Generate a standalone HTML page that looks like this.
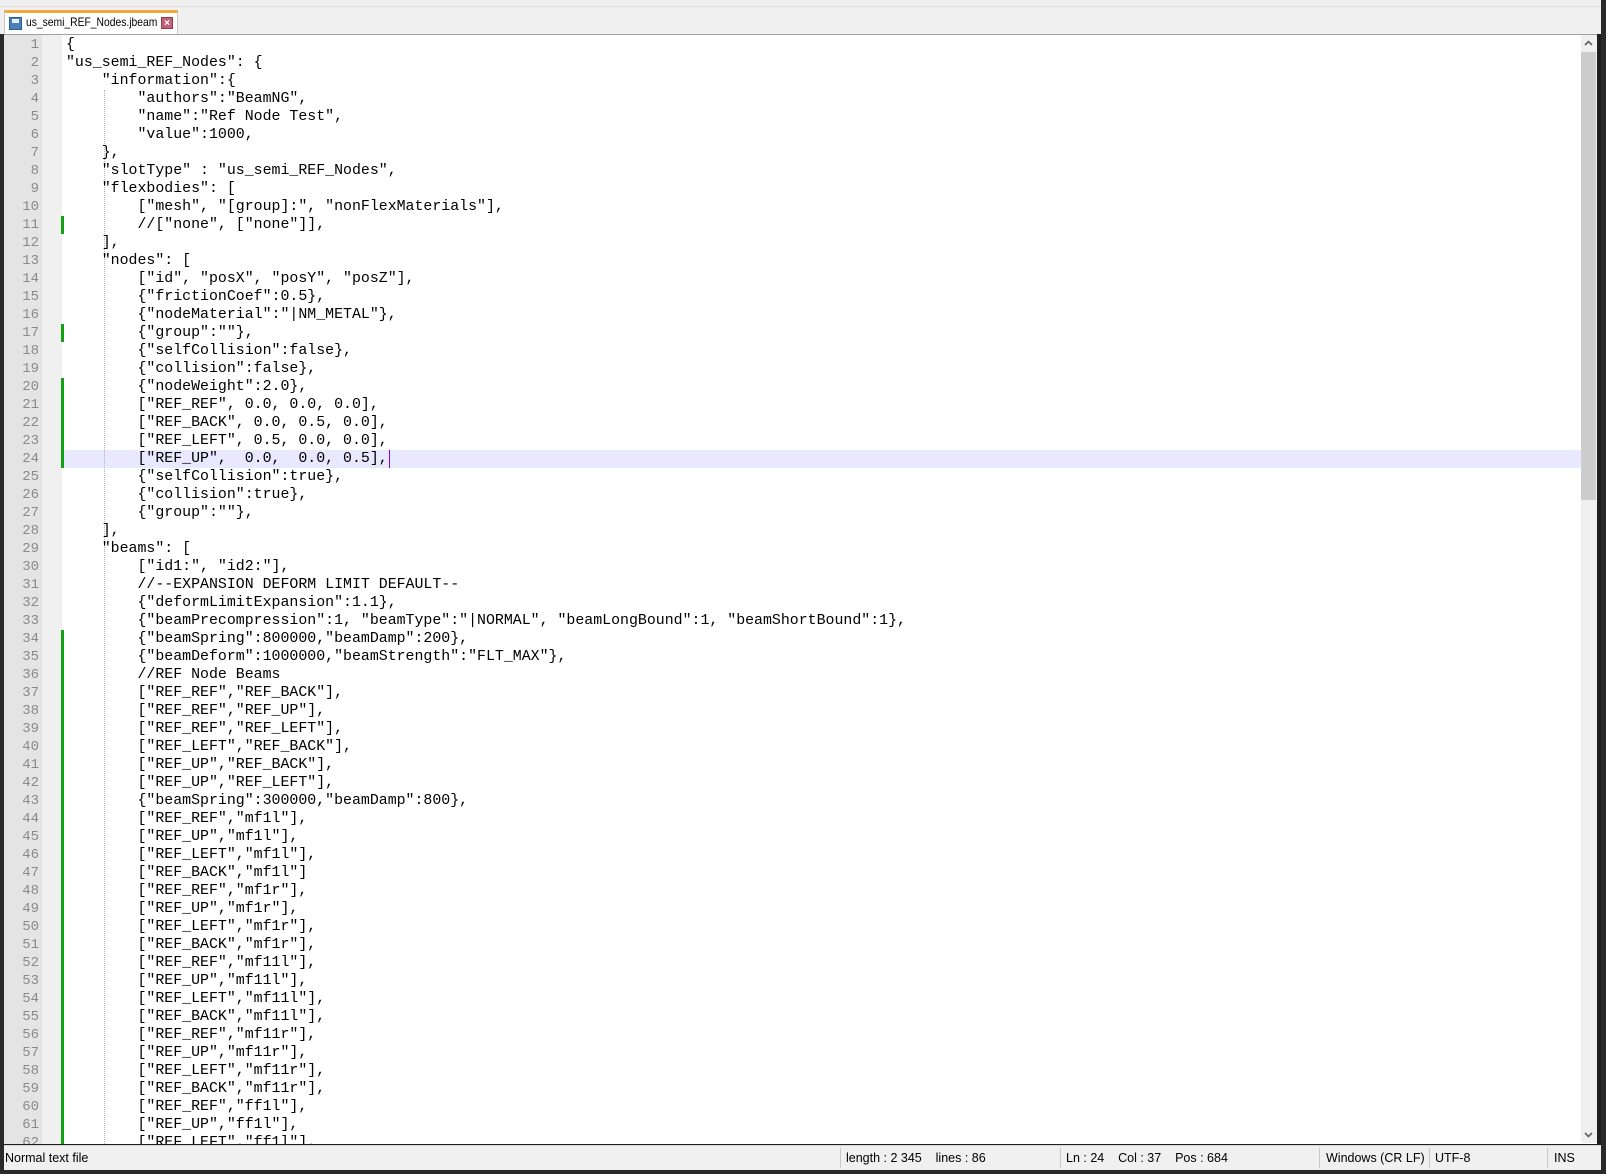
<!DOCTYPE html>
<html><head><meta charset="utf-8"><style>
*{margin:0;padding:0;box-sizing:border-box}
body{width:1606px;height:1174px;background:#1e1e1e;position:relative;overflow:hidden;font-family:"Liberation Sans",sans-serif}
#top{position:absolute;left:0;top:0;width:1601px;height:7px;background:#f0f0f0;border-bottom:1px solid #dcdcdc}
#tabbar{position:absolute;left:0;top:7px;width:1601px;height:27px;background:#f0f0f0}
#tab{position:absolute;left:4px;top:3px;width:174px;height:24px;background:#fff;border:1px solid #c8c8c8;border-bottom:none;border-top:3px solid #f7a538;color:#000;white-space:nowrap}
#tab .t{position:absolute;left:21px;top:0;font-size:12px;line-height:19px;transform:scaleX(0.86);transform-origin:0 0}
#tab .ic{position:absolute;left:4px;top:4px;width:13px;height:13px;background:#4a7fb8;border:1px solid #2e5f94}
#tab .ic:after{content:"";position:absolute;left:2px;top:1px;width:7px;height:4px;background:#e8eef6}
#tab .x{position:absolute;left:156px;top:4px;width:12px;height:12px;background:#c0607a;color:#fff;font-size:10px;line-height:11px;text-align:center;font-weight:bold;border:1px solid #98384e}
#ed{position:absolute;left:4px;top:34px;width:1593px;height:1110px;background:#fff;overflow:hidden;border-top:1px solid #a0a0a0}
#num{position:absolute;left:0;top:0;width:38px;height:1110px;background:#e4e4e4}
#fold{position:absolute;left:38px;top:0;width:20px;height:1110px;background:#f0f0f0}
.ln{position:absolute;left:0;width:35px;text-align:right;color:#8a8a8a;font:14px/18px "Liberation Mono",monospace}
.tx{position:absolute;left:62px;white-space:pre;color:#000;font:14.9px/18px "Liberation Mono",monospace}
.g{position:absolute;left:57px;width:3px;height:18px;background:#12a012}
#hl{position:absolute;left:58px;top:415px;width:1519px;height:18px;background:#e8e8ff}
#guide{position:absolute;left:100px;top:55px;height:1060px;border-left:1px dotted #b0b0b0}
#caret{position:absolute;left:385px;top:415px;width:1px;height:18px;background:#8000ff}
#sb{position:absolute;left:1581px;top:35px;width:16px;height:1108px;background:#f0f0f0}
#thumb{position:absolute;left:1581px;top:52px;width:15px;height:448px;background:#cdcdcd}
.ar{position:absolute;left:1581px;width:15px;height:17px}
#status{position:absolute;left:0;top:1145px;width:1601px;height:25px;background:#f0f0f0;border-top:1px solid #d8d8d8;font-size:12.5px;color:#000}
#status span{position:absolute;top:5px;white-space:pre}
.sep{position:absolute;top:2px;width:1px;height:20px;background:#c8c8c8}
#rstrip{position:absolute;left:1601px;top:0;width:5px;height:1174px;background:#2a2a2a}
</style></head><body>
<div id="top"></div>
<div id="tabbar"><div id="tab"><div class="ic"></div><span class="t">us_semi_REF_Nodes.jbeam</span><div class="x">×</div></div></div>
<div id="ed">
<div id="num"></div><div id="fold"></div>
<div id="hl"></div>
<div id="guide"></div>
<div class="g" style="top:181px"></div>
<div class="g" style="top:289px"></div>
<div class="g" style="top:343px;height:90px"></div>
<div class="g" style="top:595px;height:520px"></div>
<div id="lines"></div>
<div id="caret"></div>
</div>
<div id="sb"></div><div id="thumb"></div>
<svg class="ar" style="top:35px" viewBox="0 0 15 17"><path d="M4 10 L7.5 6.5 L11 10" fill="none" stroke="#606060" stroke-width="1.6"/></svg>
<svg class="ar" style="top:1126px" viewBox="0 0 15 17"><path d="M4 7 L7.5 10.5 L11 7" fill="none" stroke="#606060" stroke-width="1.6"/></svg>
<div id="status">
<span style="left:5px">Normal text file</span>
<div class="sep" style="left:840px"></div>
<span style="left:846px">length : 2 345    lines : 86</span>
<div class="sep" style="left:1060px"></div>
<span style="left:1066px">Ln : 24    Col : 37    Pos : 684</span>
<div class="sep" style="left:1319px"></div>
<span style="left:1326px">Windows (CR LF)</span>
<div class="sep" style="left:1429px"></div>
<span style="left:1435px">UTF-8</span>
<div class="sep" style="left:1547px"></div>
<span style="left:1554px">INS</span>
</div>
<div id="rstrip"></div>
<div style="position:absolute;left:0;top:34px;width:4px;height:1140px;background:#2a2a2a"></div>
<div style="position:absolute;left:0;top:1170px;width:1606px;height:4px;background:#2a2a2a"></div>
<script>
var L=[
'{',
'"us_semi_REF_Nodes": {',
'    "information":{',
'        "authors":"BeamNG",',
'        "name":"Ref Node Test",',
'        "value":1000,',
'    },',
'    "slotType" : "us_semi_REF_Nodes",',
'    "flexbodies": [',
'        ["mesh", "[group]:", "nonFlexMaterials"],',
'        //["none", ["none"]],',
'    ],',
'    "nodes": [',
'        ["id", "posX", "posY", "posZ"],',
'        {"frictionCoef":0.5},',
'        {"nodeMaterial":"|NM_METAL"},',
'        {"group":""},',
'        {"selfCollision":false},',
'        {"collision":false},',
'        {"nodeWeight":2.0},',
'        ["REF_REF", 0.0, 0.0, 0.0],',
'        ["REF_BACK", 0.0, 0.5, 0.0],',
'        ["REF_LEFT", 0.5, 0.0, 0.0],',
'        ["REF_UP",  0.0,  0.0, 0.5],',
'        {"selfCollision":true},',
'        {"collision":true},',
'        {"group":""},',
'    ],',
'    "beams": [',
'        ["id1:", "id2:"],',
'        //--EXPANSION DEFORM LIMIT DEFAULT--',
'        {"deformLimitExpansion":1.1},',
'        {"beamPrecompression":1, "beamType":"|NORMAL", "beamLongBound":1, "beamShortBound":1},',
'        {"beamSpring":800000,"beamDamp":200},',
'        {"beamDeform":1000000,"beamStrength":"FLT_MAX"},',
'        //REF Node Beams',
'        ["REF_REF","REF_BACK"],',
'        ["REF_REF","REF_UP"],',
'        ["REF_REF","REF_LEFT"],',
'        ["REF_LEFT","REF_BACK"],',
'        ["REF_UP","REF_BACK"],',
'        ["REF_UP","REF_LEFT"],',
'        {"beamSpring":300000,"beamDamp":800},',
'        ["REF_REF","mf1l"],',
'        ["REF_UP","mf1l"],',
'        ["REF_LEFT","mf1l"],',
'        ["REF_BACK","mf1l"]',
'        ["REF_REF","mf1r"],',
'        ["REF_UP","mf1r"],',
'        ["REF_LEFT","mf1r"],',
'        ["REF_BACK","mf1r"],',
'        ["REF_REF","mf11l"],',
'        ["REF_UP","mf11l"],',
'        ["REF_LEFT","mf11l"],',
'        ["REF_BACK","mf11l"],',
'        ["REF_REF","mf11r"],',
'        ["REF_UP","mf11r"],',
'        ["REF_LEFT","mf11r"],',
'        ["REF_BACK","mf11r"],',
'        ["REF_REF","ff1l"],',
'        ["REF_UP","ff1l"],',
'        ["REF_LEFT","ff1l"],'
];
var h='';
for(var i=0;i<L.length;i++){
 var t=i*18+1;
 var s=L[i].replace(/&/g,'&amp;').replace(/</g,'&lt;');
 h+='<div class="ln" style="top:'+t+'px">'+(i+1)+'</div><div class="tx" style="top:'+t+'px">'+s+'</div>';
}
document.getElementById('lines').innerHTML=h;
</script>
</body></html>
